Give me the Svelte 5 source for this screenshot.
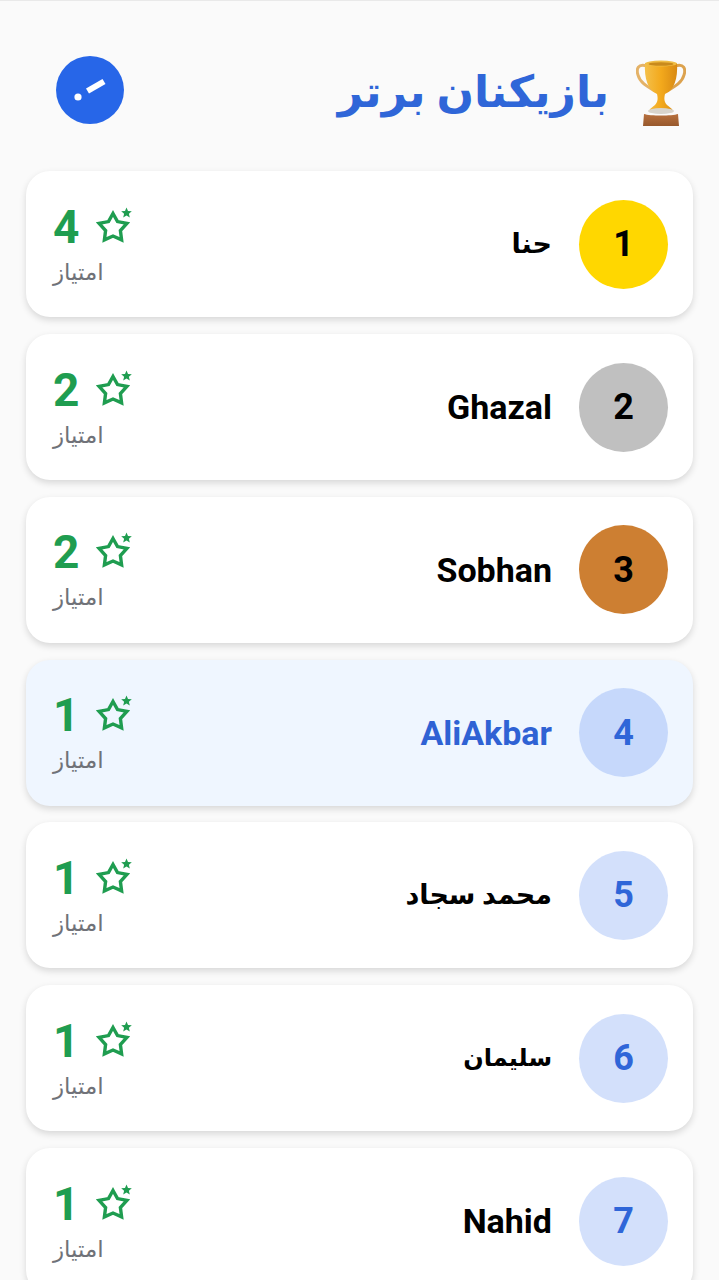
<script lang="ts">
  type Player = { rank: number; name: string; score: number; medal: string; me?: boolean; fa?: boolean; size?: number };

  const players: Player[] = [
    { rank: 1, name: "حنا", score: 4, medal: "gold", fa: true },
    { rank: 2, name: "Ghazal", score: 2, medal: "silver" },
    { rank: 3, name: "Sobhan", score: 2, medal: "bronze" },
    { rank: 4, name: "AliAkbar", score: 1, medal: "plain", me: true },
    { rank: 5, name: "محمد سجاد", score: 1, medal: "plain", fa: true },
    { rank: 6, name: "سلیمان", score: 1, medal: "plain", fa: true, size: 24 },
    { rank: 7, name: "Nahid", score: 1, medal: "plain" }
  ];
</script>

<div class="page" dir="rtl">
  <header class="head">
    <h1>
      <svg class="trophy" viewBox="0 0 50 66" aria-hidden="true">
        <defs>
          <linearGradient id="cup" x1="0" x2="1" y1="0" y2="0">
            <stop offset="0" stop-color="#f4c04a" />
            <stop offset="0.5" stop-color="#f3a91c" />
            <stop offset="1" stop-color="#d88a14" />
          </linearGradient>
          <linearGradient id="wood" x1="0" x2="0" y1="0" y2="1">
            <stop offset="0" stop-color="#b8713f" />
            <stop offset="1" stop-color="#97582c" />
          </linearGradient>
        </defs>
        <path d="M11 6 C2 3 0 9 2 15 C4 23 12 27 19 31" fill="none" stroke="#e4b267" stroke-width="3" />
        <path d="M39 6 C48 3 50 9 48 15 C46 23 38 27 31 31" fill="none" stroke="#dca24e" stroke-width="3" />
        <path d="M9 3 H41 C42 19 38 30 29 34 C28 38 28 42 31 45 C33 47 36 48 37 51 H13 C14 48 17 47 19 45 C22 42 22 38 21 34 C12 30 8 19 9 3 Z" fill="url(#cup)" />
        <ellipse cx="25" cy="3.5" rx="16" ry="3" fill="#f0bd45" />
        <ellipse cx="25" cy="4" rx="12.5" ry="1.8" fill="#c98a1c" />
        <ellipse cx="25" cy="51" rx="13" ry="3" fill="#d8d4cc" />
        <path d="M8 54 C14 56 36 56 42 54 L43 66 H7 Z" fill="url(#wood)" />
      </svg>
      <span>بازیکنان برتر</span>
    </h1>
    <button class="round" aria-label="بازگشت">
      <svg viewBox="0 0 68 68" aria-hidden="true">
        <circle cx="22" cy="41" r="3.6" fill="#fff" />
        <path d="M31.5 35 L48 25.5" stroke="#fff" stroke-width="6" />
      </svg>
    </button>
  </header>

  <div class="list">
    {#each players as p (p.rank)}
      <article class="card" class:me={p.me}>
        <div class="who">
          <div class="rank {p.medal}">{p.rank}</div>
          <div class="name" class:fa={p.fa} style:font-size={p.size ? `${p.size}px` : null}>{p.name}</div>
        </div>
        <div class="points">
          <div class="scoreline">
            <svg class="star" viewBox="0 0 36 36" aria-hidden="true">
              <path d="M16 5.5 L20.5 13.6 L29.9 15.4 L23.4 22.5 L24.6 31.9 L16 28 L7.4 31.9 L8.6 22.5 L2.1 15.4 L11.5 13.6 Z" fill="none" stroke="currentColor" stroke-width="3.4" stroke-miterlimit="10" />
              <path d="M29.5 -0.5 L31 3 L34.8 3.3 L31.9 5.8 L32.8 9.5 L29.5 7.5 L26.2 9.5 L27.1 5.8 L24.2 3.3 L28 3 Z" fill="currentColor" />
            </svg>
            <span class="score">{p.score}</span>
          </div>
          <div class="label">امتیاز</div>
        </div>
      </article>
    {/each}
  </div>
</div>

<style>
  :global(body) {
    margin: 0;
    background: #fafafa;
  }

  .page {
    height: 1280px;
    overflow: hidden;
    box-sizing: border-box;
    padding: 54px 26px 0;
    border-top: 1px solid #e9e9e9;
    font-family: Roboto, "DejaVu Sans", sans-serif;
  }

  .head {
    display: flex;
    justify-content: space-between;
    align-items: center;
    height: 70px;
    padding: 0 7px 0 30px;
    margin-bottom: 46.3px;
  }

  h1 {
    display: flex;
    align-items: center;
    gap: 27px;
    margin: 0;
    color: #2f66d8;
    font-size: 44px;
    font-weight: 700;
  }
  h1 span {
    margin-top: 4px;
  }

  .trophy {
    width: 50px;
    height: 66px;
    flex: none;
    margin-top: 5px;
  }

  .round {
    width: 68px;
    height: 68px;
    padding: 0;
    border: 0;
    border-radius: 50%;
    background: #2766e8;
  }
  .round svg {
    display: block;
    width: 68px;
    height: 68px;
  }

  .list {
    display: flex;
    flex-direction: column;
    gap: 16.8px;
  }

  .card {
    display: flex;
    justify-content: space-between;
    align-items: center;
    height: 146px;
    flex: none;
    box-sizing: border-box;
    padding: 0 25px 0 27px;
    border-radius: 24px;
    background: #fff;
    box-shadow: 0 3px 7px rgba(0, 0, 0, 0.14);
  }
  .card.me {
    background: #eff6ff;
  }

  .who {
    display: flex;
    align-items: center;
    gap: 27px;
  }

  .rank {
    display: flex;
    align-items: center;
    justify-content: center;
    width: 89px;
    height: 89px;
    border-radius: 50%;
    font-size: 36px;
    font-weight: 700;
    color: #2f66d8;
    background: rgba(37, 99, 235, 0.2);
  }
  .rank.gold {
    background: #ffd700;
    color: #000;
  }
  .rank.silver {
    background: #c0c0c0;
    color: #000;
  }
  .rank.bronze {
    background: #cd7f32;
    color: #000;
  }

  .name {
    font-size: 34px;
    font-weight: 700;
    color: #000;
  }
  .name.fa {
    font-size: 27px;
  }
  .me .name {
    color: #2f62d4;
  }

  .points {
    display: flex;
    flex-direction: column;
    gap: 6px;
    margin-top: -1px;
  }

  .scoreline {
    display: flex;
    align-items: center;
    gap: 18px;
  }

  .score {
    font-size: 46px;
    font-weight: 700;
    line-height: 52px;
    color: #1f9d50;
  }

  .star {
    width: 36px;
    height: 36px;
    margin-top: -2px;
    color: #1f9d50;
    overflow: visible;
  }

  .label {
    font-size: 23px;
    line-height: 28px;
    color: #6f7278;
    text-align: left;
  }
</style>
